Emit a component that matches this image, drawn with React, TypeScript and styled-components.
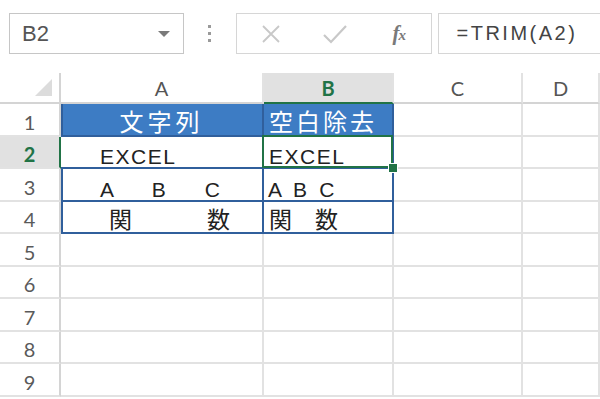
import styled, { createGlobalStyle } from 'styled-components';

const GlobalStyle = createGlobalStyle`
  html, body {
    margin: 0;
    padding: 0;
    background: #ffffff;
    overflow: hidden;
  }
  * {
    box-sizing: border-box;
  }
`;

const GREEN = '#217346';
const BLUE_FILL = '#3d7cc4';
const BLUE_LINE = '#305f9c';
const GRID = '#e2e2e2';
const HEAD_LINE = '#d4d4d4';

const Page = styled.div`
  width: 600px;
  height: 399px;
  overflow: hidden;
  background: #ffffff;
  font-family: 'Liberation Sans', 'Noto Sans CJK JP', sans-serif;
`;

const Toolbar = styled.div`
  display: flex;
  align-items: flex-start;
  height: 73px;
  padding: 13px 0 0 9px;
`;

const NameBox = styled.div`
  display: flex;
  align-items: center;
  justify-content: space-between;
  width: 183px;
  height: 41px;
  padding: 0 13px 0 12px;
  border: 1px solid #c6c6c6;
  font-size: 22px;
  color: #555555;
`;

const Caret = styled.span`
  width: 0;
  height: 0;
  border-left: 6px solid transparent;
  border-right: 6px solid transparent;
  border-top: 6px solid #7a7a7a;
`;

const Grip = styled.div`
  display: flex;
  flex-direction: column;
  align-items: center;
  justify-content: center;
  gap: 4px;
  width: 54px;
  height: 41px;
`;

const GripDot = styled.span`
  width: 3px;
  height: 3px;
  background: #9a9a9a;
`;

const ButtonBox = styled.div`
  display: flex;
  align-items: center;
  width: 196px;
  height: 41px;
  padding-left: 3px;
  border: 1px solid #d6d6d6;
`;

const ToolButton = styled.div`
  display: flex;
  align-items: center;
  justify-content: center;
  width: 64px;
  height: 100%;
`;

const FxMark = styled.span`
  font-family: 'Liberation Serif', serif;
  font-style: italic;
  font-weight: 700;
  font-size: 21px;
  color: #7a7a7a;
  letter-spacing: -1px;

  small {
    font-size: 15px;
  }
`;

const FormulaInput = styled.div`
  display: flex;
  align-items: center;
  width: 170px;
  height: 41px;
  margin-left: 6px;
  padding-left: 18px;
  border: 1px solid #d6d6d6;
  border-right: none;
  font-size: 20px;
  letter-spacing: 2.5px;
  color: #444444;
  white-space: nowrap;
`;

const Sheet = styled.div`
  display: grid;
  grid-template-columns: 61px 203px 130px 129px 1fr;
  grid-template-rows: 31px repeat(9, 32.5px);
`;

const Corner = styled.div`
  display: flex;
  align-items: flex-end;
  justify-content: flex-end;
  padding: 0 7px 6px 0;
  border-right: 2px solid ${HEAD_LINE};
  border-bottom: 2px solid ${HEAD_LINE};
`;

const ColHeader = styled.div<{ $active?: boolean }>`
  display: flex;
  align-items: center;
  justify-content: center;
  font-family: 'Lato', 'Liberation Sans', sans-serif;
  font-size: 20px;
  font-weight: ${(p) => (p.$active ? 700 : 400)};
  color: ${(p) => (p.$active ? GREEN : '#555555')};
  background: ${(p) => (p.$active ? '#e1e1e1' : '#ffffff')};
  border-right: 2px solid ${GRID};
  border-bottom: 2px solid ${(p) => (p.$active ? GREEN : HEAD_LINE)};
`;

const RowHeader = styled.div<{ $active?: boolean }>`
  display: flex;
  align-items: flex-end;
  justify-content: center;
  line-height: 1;
  padding-bottom: 3px;
  font-family: 'Lato', 'Liberation Sans', sans-serif;
  font-size: 20px;
  font-weight: ${(p) => (p.$active ? 700 : 400)};
  color: ${(p) => (p.$active ? GREEN : '#5a5a5a')};
  background: ${(p) => (p.$active ? '#e1e1e1' : '#ffffff')};
  border-right: 2px solid ${(p) => (p.$active ? GREEN : HEAD_LINE)};
  border-bottom: 2px solid ${GRID};
`;

type Tone = 'grid' | 'table' | 'title';

const Cell = styled.div<{
  $tone: Tone;
  $edge?: boolean;
  $center?: boolean;
  $pad?: number;
  $ls?: number;
  $size?: number;
  $selected?: boolean;
}>`
  position: relative;
  display: flex;
  align-items: flex-end;
  justify-content: ${(p) => (p.$center ? 'center' : 'flex-start')};
  padding-left: ${(p) => p.$pad ?? 0}px;
  line-height: 1;
  font-size: ${(p) => p.$size ?? 21}px;
  letter-spacing: ${(p) => p.$ls ?? 0}px;
  white-space: pre;
  color: ${(p) => (p.$tone === 'title' ? '#ffffff' : '#222222')};
  background: ${(p) => (p.$tone === 'title' ? BLUE_FILL : '#ffffff')};
  border-right: 2px solid ${(p) => (p.$tone === 'grid' ? GRID : BLUE_LINE)};
  border-bottom: 2px solid ${(p) => (p.$tone === 'grid' ? GRID : BLUE_LINE)};
  box-shadow: ${(p) => (p.$edge ? `inset 2px 0 0 ${BLUE_LINE}` : 'none')};

  ${(p) =>
    p.$selected &&
    `
    &::after {
      content: '';
      position: absolute;
      left: -2px;
      top: -2px;
      right: -1px;
      bottom: -1px;
      border: 2px solid ${GREEN};
      pointer-events: none;
    }
    &::before {
      content: '';
      position: absolute;
      right: -6px;
      bottom: -6px;
      width: 8px;
      height: 8px;
      background: ${GREEN};
      border: 1px solid #ffffff;
      z-index: 2;
    }
  `}
`;

type CellDef = {
  text?: string;
  tone: Tone;
  center?: boolean;
  pad?: number;
  ls?: number;
  size?: number;
  selected?: boolean;
};

const tableRows: CellDef[][] = [
  [
    { text: '文字列', tone: 'title', center: true, ls: 4, size: 24 },
    { text: '空白除去', tone: 'title', pad: 5, ls: 3, size: 24 },
  ],
  [
    { text: 'EXCEL', tone: 'table', pad: 39, ls: 1.5 },
    { text: 'EXCEL', tone: 'table', pad: 5, ls: 1.5, selected: true },
  ],
  [
    { text: 'A　B　C', tone: 'table', pad: 39, ls: 9 },
    { text: 'A B C', tone: 'table', pad: 4, ls: 3.2 },
  ],
  [
    { text: '関　　　数', tone: 'table', pad: 48, ls: 1.5, size: 23 },
    { text: '関　数', tone: 'table', pad: 5, size: 23 },
  ],
];

const columns = ['A', 'B', 'C', 'D'];
const rowCount = 9;

export default function App() {
  return (
    <Page>
      <GlobalStyle />
      <Toolbar>
        <NameBox>
          <span>B2</span>
          <Caret />
        </NameBox>
        <Grip>
          <GripDot />
          <GripDot />
          <GripDot />
        </Grip>
        <ButtonBox>
          <ToolButton>
            <svg width="20" height="20" viewBox="0 0 20 20">
              <path d="M2 2 L18 18 M18 2 L2 18" stroke="#c8c8c8" strokeWidth="1.8" fill="none" />
            </svg>
          </ToolButton>
          <ToolButton>
            <svg width="24" height="20" viewBox="0 0 24 20">
              <path d="M1 11 L8 18 L23 2" stroke="#c8c8c8" strokeWidth="2.2" fill="none" />
            </svg>
          </ToolButton>
          <ToolButton>
            <FxMark>
              f<small>x</small>
            </FxMark>
          </ToolButton>
        </ButtonBox>
        <FormulaInput>=TRIM(A2)</FormulaInput>
      </Toolbar>

      <Sheet>
        <Corner>
          <svg width="17" height="17" viewBox="0 0 17 17">
            <polygon points="17,0 17,17 0,17" fill="#dcdcdc" />
          </svg>
        </Corner>
        {columns.map((c) => (
          <ColHeader key={c} $active={c === 'B'}>
            {c}
          </ColHeader>
        ))}

        {Array.from({ length: rowCount }, (_, r) => {
          const defs = tableRows[r];
          return [
            <RowHeader key={`h${r}`} $active={r === 1}>
              {r + 1}
            </RowHeader>,
            ...[0, 1].map((ci) => {
              const d = defs?.[ci] ?? { tone: 'grid' as Tone };
              return (
                <Cell
                  key={`c${r}-${ci}`}
                  $tone={d.tone}
                  $edge={ci === 0 && !!defs && r !== 1}
                  $center={d.center}
                  $pad={d.pad}
                  $ls={d.ls}
                  $size={d.size}
                  $selected={d.selected}
                >
                  {d.text}
                </Cell>
              );
            }),
            <Cell key={`c${r}-2`} $tone="grid" />,
            <Cell key={`c${r}-3`} $tone="grid" />,
          ];
        })}
      </Sheet>
    </Page>
  );
}
